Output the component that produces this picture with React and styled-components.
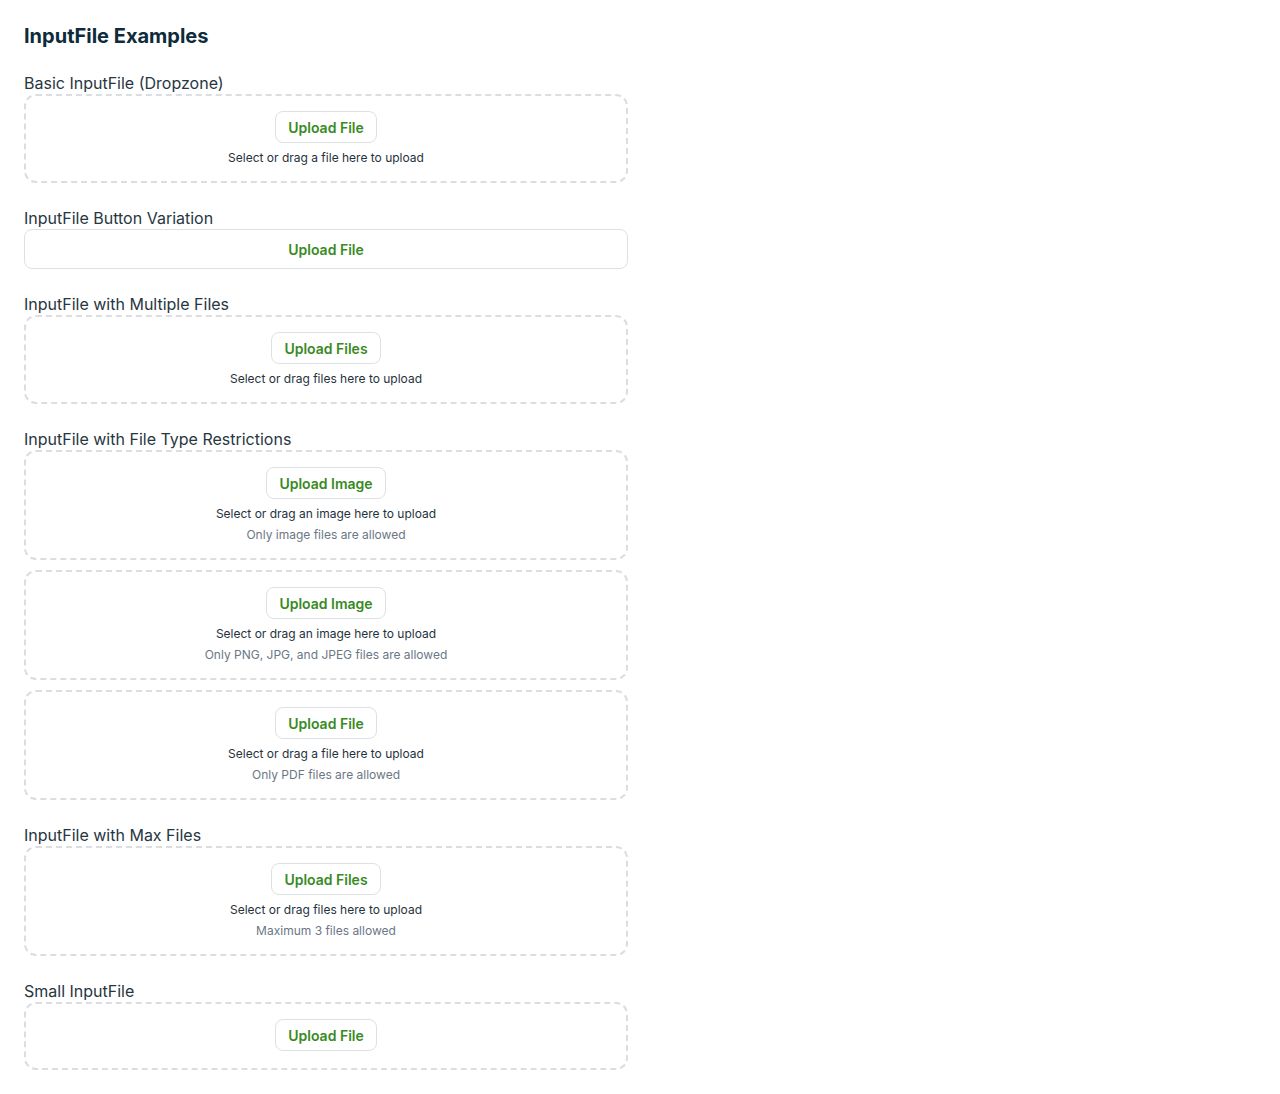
import React from "react";
import styled, { createGlobalStyle } from "styled-components";

const Global = createGlobalStyle`
  html, body { margin: 0; padding: 0; background: #ffffff; }
  body { font-family: Inter, "Noto Sans", sans-serif; -webkit-font-smoothing: antialiased; }
`;

const Page = styled.div`
  padding: 24px;
  width: 604px;
  display: flex;
  flex-direction: column;
  gap: 24px;
`;

const Title = styled.h1`
  margin: 0;
  font-size: 20px;
  line-height: 24px;
  font-weight: 700;
  color: #0d2b3a;
`;

const Section = styled.section`
  display: flex;
  flex-direction: column;
  gap: ${(p) => (p.$stack ? "10px" : "0")};
`;

const Label = styled.div`
  font-size: 16px;
  line-height: 22px;
  color: #27363f;
  margin-bottom: ${(p) => (p.$stack ? "-10px" : "0")};
`;

const Dropzone = styled.div`
  border: 2px dashed #dadee2;
  border-radius: 12px;
  padding: 15px 16px ${(p) => (p.$compact ? "17px" : "15px")};
  display: flex;
  flex-direction: column;
  align-items: center;
`;

const Button = styled.button`
  font-family: inherit;
  font-size: 14px;
  font-weight: 600;
  color: #3a8a24;
  background: #fff;
  border: 1px solid #dde1e5;
  border-radius: 8px;
  height: ${(p) => (p.$full ? "40px" : "32px")};
  width: ${(p) => (p.$full ? "100%" : "auto")};
  padding: 0 12px;
  cursor: pointer;
`;

const Desc = styled.div`
  margin-top: 7px;
  font-size: 12px;
  line-height: 16px;
  color: #26323c;
`;

const Hint = styled.div`
  margin-top: 5px;
  font-size: 12px;
  line-height: 16px;
  color: #6b7785;
`;

function Zone({ button, desc, hint }) {
  return (
    <Dropzone $compact={!desc}>
      <Button>{button}</Button>
      {desc && <Desc>{desc}</Desc>}
      {hint && <Hint>{hint}</Hint>}
    </Dropzone>
  );
}

export default function App() {
  return (
    <>
      <Global />
      <Page>
        <Title>InputFile Examples</Title>
        <Section>
          <Label>Basic InputFile (Dropzone)</Label>
          <Zone button="Upload File" desc="Select or drag a file here to upload" />
        </Section>
        <Section>
          <Label>InputFile Button Variation</Label>
          <Button $full>Upload File</Button>
        </Section>
        <Section>
          <Label>InputFile with Multiple Files</Label>
          <Zone button="Upload Files" desc="Select or drag files here to upload" />
        </Section>
        <Section $stack>
          <Label $stack>InputFile with File Type Restrictions</Label>
          <Zone
            button="Upload Image"
            desc="Select or drag an image here to upload"
            hint="Only image files are allowed"
          />
          <Zone
            button="Upload Image"
            desc="Select or drag an image here to upload"
            hint="Only PNG, JPG, and JPEG files are allowed"
          />
          <Zone
            button="Upload File"
            desc="Select or drag a file here to upload"
            hint="Only PDF files are allowed"
          />
        </Section>
        <Section>
          <Label>InputFile with Max Files</Label>
          <Zone
            button="Upload Files"
            desc="Select or drag files here to upload"
            hint="Maximum 3 files allowed"
          />
        </Section>
        <Section>
          <Label>Small InputFile</Label>
          <Zone button="Upload File" />
        </Section>
      </Page>
    </>
  );
}
